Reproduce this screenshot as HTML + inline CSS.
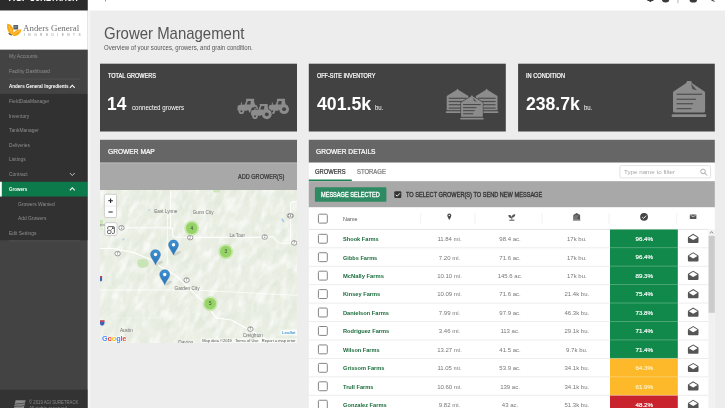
<!DOCTYPE html>
<html lang="en">
<head>
<meta charset="utf-8">
<title>Grower Management</title>
<style>
*{box-sizing:border-box;margin:0;padding:0}
html,body{width:725px;height:408px;overflow:hidden;background:#ededed;font-family:"Liberation Sans",sans-serif}
#root{position:relative;width:725px;height:408px;overflow:hidden;background:#ededed}
#root div,#root span,#root svg{position:absolute}
.t{white-space:nowrap;line-height:1}
</style>
</head>
<body>
<div id="root">
<svg style="left:0;top:0" width="725" height="408" viewBox="0 0 725 408"><rect x="0" y="0" width="725" height="408" fill="#ededed"/><rect x="0" y="0" width="87.8" height="408" fill="#434343"/><rect x="0" y="0" width="87.8" height="10.5" fill="#2b2b2b"/><rect x="0" y="10.5" width="87.8" height="39.3" fill="#fff"/><rect x="0" y="49.8" width="87.8" height="44.1" fill="#434343"/><rect x="0" y="93.9" width="87.8" height="146.3" fill="#313131"/><rect x="9" y="78.7" width="70.5" height="0.7" fill="#565656"/><rect x="0" y="181.8" width="87.8" height="14.7" fill="#0c7a4b"/><rect x="0" y="181.8" width="1.8" height="14.7" fill="#fff"/><rect x="9" y="240.6" width="70.5" height="0.7" fill="#585858"/><rect x="0" y="389.7" width="87.8" height="18.3" fill="#333"/><rect x="87.8" y="10.5" width="1.6" height="397.5" fill="#f7f7f7"/><rect x="89.39999999999999" y="10.5" width="1.2" height="397.5" fill="#f2f2f2"/><path d="M69.9 87.8 L72.3 85.2 L74.7 87.8" fill="none" stroke="#fff" stroke-width="1.1"/><path d="M69.9 173 L72.3 175.6 L74.7 173" fill="none" stroke="#bdbdbd" stroke-width="1"/><path d="M69.9 190.3 L72.3 187.7 L74.7 190.3" fill="none" stroke="#fff" stroke-width="1.1"/><g transform="translate(6.5,23.5)">
<path d="M6.9 1.6 h4.7 v4.3 h-4.7z" fill="#596068"/>
<path d="M8 2.6 h2.2 v1.6 h-2.2z" fill="#8a9098"/>
<path d="M1.6 9.4 q1.4 2.8 4 2.6 l-.4 -2.8z" fill="#4d5864"/>
<path d="M0.8 0.3 C4.6 0.5 7.8 4 6.9 12.1 C2.4 10.6 -0.5 6 0.8 0.3z" fill="#f9a811"/>
<path d="M14.9 6.1 C14.2 10.6 10.6 13.1 6.3 12.5 C6.5 8.3 10 5.5 14.9 6.1z" fill="#f9a811"/>
<path d="M2.2 2.4 C3.6 5.2 5 8 5.8 10.6" stroke="#fde2a8" stroke-width=".5" fill="none"/>
<path d="M13.4 7 C10.6 8.2 8.2 10 6.8 12" stroke="#fde2a8" stroke-width=".5" fill="none"/>
</g><g transform="translate(13.4,400.3)"><path d="M2.2 0 H12.2 L10.4 8 H0.4z" fill="#8b8b8b"/><path d="M1.2 4.2 C4.5 2.2 8 4.6 11.4 2.4 M0.8 6.6 C4 4.6 7.6 7 10.8 5" stroke="#333" stroke-width=".7" fill="none"/></g><rect x="87.8" y="0" width="637.2" height="10.5" fill="#fff"/><g transform="translate(640,0)">
<path d="M7.4 0 h6 v1 h-6z M9.5 1.1 h1.8 v.9 h-1.8z" fill="#3a3a3a"/>
<path d="M22 0 a3.6 2.4 0 0 0 7.2 0z" fill="#3a3a3a"/>
<rect x="37.6" y="0" width=".7" height="3.2" fill="#999"/>
<path d="M49.6 0 a3.7 2.6 0 0 0 7.4 0z" fill="#3a3a3a"/>
<path d="M70.8 0 h2 l2.6 1.6 h-2z" fill="#3a3a3a"/>
</g><rect x="105" y="0" width="0.8" height="1.4" fill="#777"/><rect x="100" y="63.7" width="197" height="67.8" fill="#424242"/><rect x="308.8" y="63.7" width="197" height="67.8" fill="#424242"/><rect x="518.1" y="63.7" width="196.7" height="67.8" fill="#424242"/><rect x="100" y="139.8" width="197" height="22.9" fill="#666"/><rect x="100" y="162.7" width="197" height="27.5" fill="#a8a8a8"/><rect x="100" y="162.9" width="197" height="0.8" fill="#b6b6b6"/><rect x="308.8" y="139.8" width="406" height="22.9" fill="#666"/><rect x="308.8" y="162.7" width="406" height="18.5" fill="#fff"/><rect x="308.8" y="179.5" width="43" height="1.6" fill="#1d8153"/><rect x="308.8" y="181.2" width="406" height="26.2" fill="#a8a8a8"/><rect x="308.8" y="207.4" width="406" height="200.6" fill="#fff"/><rect x="619.9" y="165.9" width="90.7" height="12.4" rx="1" fill="#000" opacity=".06"/><rect x="619.9" y="165.6" width="90.7" height="12.3" rx="1" fill="#fff" stroke="#dcdcdc" stroke-width=".8"/><circle cx="703" cy="171.4" r="2.3" fill="none" stroke="#9a9a9a" stroke-width=".8"/><path d="M704.7 173.1 L707.1 175.5" stroke="#9a9a9a" stroke-width="1"/><rect x="314.9" y="187.3" width="71.5" height="14.4" rx="0.8" fill="#2d8a62"/><g transform="translate(394.3,191.3)"><rect width="7" height="6.8" rx="1" fill="#333"/><path d="M1.5 3.5 L2.9 4.9 L5.6 2" fill="none" stroke="#fff" stroke-width=".9"/></g></svg>

<svg style="left:0;top:0" width="725" height="135" viewBox="0 0 725 135"><g transform="translate(237.3,98.8)"><g fill="#8c8c8c"><path d="M9.3 0 H16.3 Q17 0 17 .7 V1.3 H16.5 L17.7 6.4 H19.4 V11 H10.2 V11.9 H1.2 Q.2 11.9 .2 10.9 V8.2 Q.2 6.3 2.1 6.1 L3.6 6 V3.7 H4.6 V5.9 L7.6 5.7 L9.1 1.3 H8.7 V.6 Q8.7 0 9.3 0z"/><circle cx="15.9" cy="10.4" r="4.9"/><circle cx="4.1" cy="12.4" r="2.8"/></g><path d="M10.6 2.1 H13.5 L13.1 5.6 H9.3z" fill="#424242"/><circle cx="15.9" cy="10.4" r="1.9" fill="#424242"/><circle cx="4.1" cy="12.4" r=".95" fill="#424242"/></g><g transform="translate(268.2,98.8)"><g fill="#8c8c8c"><path d="M9.3 0 H16.3 Q17 0 17 .7 V1.3 H16.5 L17.7 6.4 H19.4 V11 H10.2 V11.9 H1.2 Q.2 11.9 .2 10.9 V8.2 Q.2 6.3 2.1 6.1 L3.6 6 V3.7 H4.6 V5.9 L7.6 5.7 L9.1 1.3 H8.7 V.6 Q8.7 0 9.3 0z"/><circle cx="15.9" cy="10.4" r="4.9"/><circle cx="4.1" cy="12.4" r="2.8"/></g><path d="M10.6 2.1 H13.5 L13.1 5.6 H9.3z" fill="#424242"/><circle cx="15.9" cy="10.4" r="1.9" fill="#424242"/><circle cx="4.1" cy="12.4" r=".95" fill="#424242"/></g><g transform="translate(250.9,103.9)"><g fill="#424242" stroke="#424242" stroke-width="1.5" stroke-linejoin="round"><path d="M9.3 0 H16.3 Q17 0 17 .7 V1.3 H16.5 L17.7 6.4 H19.4 V11 H10.2 V11.9 H1.2 Q.2 11.9 .2 10.9 V8.2 Q.2 6.3 2.1 6.1 L3.6 6 V3.7 H4.6 V5.9 L7.6 5.7 L9.1 1.3 H8.7 V.6 Q8.7 0 9.3 0z"/><circle cx="15.9" cy="10.4" r="4.9"/><circle cx="4.1" cy="12.4" r="2.8"/></g><g fill="#8c8c8c"><path d="M9.3 0 H16.3 Q17 0 17 .7 V1.3 H16.5 L17.7 6.4 H19.4 V11 H10.2 V11.9 H1.2 Q.2 11.9 .2 10.9 V8.2 Q.2 6.3 2.1 6.1 L3.6 6 V3.7 H4.6 V5.9 L7.6 5.7 L9.1 1.3 H8.7 V.6 Q8.7 0 9.3 0z"/><circle cx="15.9" cy="10.4" r="4.9"/><circle cx="4.1" cy="12.4" r="2.8"/></g><path d="M10.6 2.1 H13.5 L13.1 5.6 H9.3z" fill="#424242"/><circle cx="15.9" cy="10.4" r="1.9" fill="#424242"/><circle cx="4.1" cy="12.4" r=".95" fill="#424242"/></g><g transform="translate(445.9,88.9)"><g fill="#8c8c8c" ><path d="M11.1 0 Q11.6 -.2 12.1 0 L12.6 1 L22.5 7.2 V21.4 H.8 V7.2 L10.7 1z"/><rect x="0" y="22.4" width="23.3" height="1.8" rx=".5"/></g><rect x="2.8" y="8.8" width="17.8" height="1.2" fill="#424242" opacity=".85"/><rect x="2.8" y="12.0" width="17.8" height="1.2" fill="#424242" opacity=".85"/><rect x="2.8" y="15.2" width="17.8" height="1.2" fill="#424242" opacity=".85"/><rect x="2.8" y="18.6" width="17.8" height="1.2" fill="#424242" opacity=".85"/></g><g transform="translate(475.0,88.9)"><g fill="#8c8c8c" ><path d="M11.1 0 Q11.6 -.2 12.1 0 L12.6 1 L22.5 7.2 V21.4 H.8 V7.2 L10.7 1z"/><rect x="0" y="22.4" width="23.3" height="1.8" rx=".5"/></g><rect x="2.8" y="8.8" width="17.8" height="1.2" fill="#424242" opacity=".85"/><rect x="2.8" y="12.0" width="17.8" height="1.2" fill="#424242" opacity=".85"/><rect x="2.8" y="15.2" width="17.8" height="1.2" fill="#424242" opacity=".85"/><rect x="2.8" y="18.6" width="17.8" height="1.2" fill="#424242" opacity=".85"/></g><g transform="translate(460.3,95.4)"><g fill="#8c8c8c" stroke="#424242" stroke-width="1.2" paint-order="stroke"><path d="M11.1 0 Q11.6 -.2 12.1 0 L12.6 1 L22.5 7.2 V21.4 H.8 V7.2 L10.7 1z"/><rect x="0" y="22.4" width="23.3" height="1.8" rx=".5"/></g><rect x="2.8" y="8.6" width="17.6" height="1.1" fill="#424242" opacity=".9"/><rect x="2.8" y="11.7" width="13.4" height="1.1" fill="#424242" opacity=".9"/><rect x="2.8" y="14.7" width="11.6" height="1.1" fill="#424242" opacity=".9"/><rect x="2.8" y="17.8" width="10.2" height="1.1" fill="#424242" opacity=".9"/><path d="M12.4 2.2 L16.6 6.6 L13.8 5.6z" fill="#424242" opacity=".85"/></g><g transform="translate(671.6,81.0)" fill="#8c8c8c"><path d="M15.6 0 H19.2 Q19.8 0 19.9 .7 L20.2 2 L32.6 10.2 Q33.5 10.8 33.5 11.6 V30 Q33.5 31.6 32 31.6 H3 Q1.4 31.6 1.4 30 V11.6 Q1.4 10.8 2.3 10.2 L14.7 2 L15 .7 Q15.1 0 15.6 0z"/><rect x="0" y="33.2" width="34.8" height="2.9" rx="1.4"/><rect x="4.9" y="12.7" width="25.6" height="1.1" fill="#424242" opacity=".9"/><rect x="4.9" y="17.7" width="19.6" height="1.1" fill="#424242" opacity=".9"/><rect x="4.9" y="22.2" width="16.6" height="1.1" fill="#424242" opacity=".9"/><rect x="4.9" y="27.1" width="15.0" height="1.1" fill="#424242" opacity=".9"/><path d="M19.4 2.6 L25.4 9.6 L20.8 8z" fill="#424242" opacity=".85"/></g></svg>
<svg id="map" style="left:100px;top:190.1px;will-change:transform" width="197" height="153" viewBox="0 0 197 153" font-family="Liberation Sans, sans-serif"><defs>
<linearGradient id="mk" x1="0" y1="0" x2="0" y2="1"><stop offset="0" stop-color="#3f94d6"/><stop offset="1" stop-color="#2a72b4"/></linearGradient>
<filter id="ter" x="0" y="0" width="100%" height="100%"><feTurbulence type="fractalNoise" baseFrequency=".13 .06" numOctaves="4" seed="11"/><feColorMatrix type="matrix" values="0 0 0 0 .74  0 0 0 0 .81  0 0 0 0 .7  2.6 0 0 0 -1.05"/></filter>
<filter id="ter2" x="0" y="0" width="100%" height="100%"><feTurbulence type="fractalNoise" baseFrequency=".15 .07" numOctaves="4" seed="4"/><feColorMatrix type="matrix" values="0 0 0 0 1  0 0 0 0 1  0 0 0 0 1  0 2.4 0 0 -1"/></filter>
<filter id="ter3" x="0" y="0" width="100%" height="100%"><feTurbulence type="fractalNoise" baseFrequency=".02 .025" numOctaves="2" seed="7"/><feColorMatrix type="matrix" values="0 0 0 0 .8  0 0 0 0 .86  0 0 0 0 .76  1.6 0 0 0 -.62"/></filter>
<clipPath id="mc"><rect width="197" height="153"/></clipPath>
</defs><rect width="197" height="153" fill="#eaeee3"/><rect width="197" height="153" filter="url(#ter3)" opacity=".5"/><g clip-path="url(#mc)"><g transform="rotate(24 98 76)"><rect x="-60" y="-80" width="320" height="320" filter="url(#ter)" opacity=".7"/><rect x="-60" y="-80" width="320" height="320" filter="url(#ter2)" opacity=".7"/></g></g><path d="M38 70 q4.5 -1.8 9 0 q2.6 2.8 .8 6.2 q-4.4 2.6 -9 .8 q-2.6 -3.4 -.8 -7z" fill="#c5e3b0" opacity=".9"/><path d="M0 30 h3 v9 h-3z" fill="#bfe0a8" opacity=".8"/><path d="M113 0 h7 v2.4 h-7z" fill="#c5e3b0" opacity=".8"/><path d="M182 28 l2.4 3.6 l-1.2 .8 l-2 -3.4z" fill="#9cc8f0"/><circle cx="23.5" cy="49.5" r="1" fill="#a5cdf2"/><circle cx="49" cy="20" r=".8" fill="#a5cdf2"/><g fill="none" stroke="#fff" stroke-width="1.15" stroke-opacity=".9" stroke-linejoin="round" stroke-linecap="round"><path d="M0 37.7 H68.5 L72.6 38.6 V44.6 Q72.8 46.8 75.5 47 L90 47.4 H157 L172.5 46.6 Q174.6 47 175.5 49 L177 52 Q178 53.2 180 53.2 H197"/><path d="M70.6 0 V38.4"/><path d="M67.4 20 V74" stroke-width=".8"/><path d="M197 11.4 L192 12.4 Q190.6 12.8 190.6 15 V53"/><path d="M0 58.3 H12.5 L34 62.6 L54.5 71 L60 76.4 L76.4 85.8 L92 101.4 L103.9 112.2 L116.6 127.8 L131.3 130 L147 138.6 L162.7 146.6 L171 153" stroke-width="1.25" stroke-opacity=".95"/><path d="M0 100 H92 L197 105.3" stroke-width=".85"/></g><g fill="none" stroke="#fff" stroke-width=".45" opacity=".5"><path d="M30 0 V37 M110 47 V100 M0 128 H60 M140 53 V104 M150 0 V46"/></g><ellipse cx="21.5" cy="37.8" rx="2.7" ry="2.3" fill="#fff" stroke="#5e5e5e" stroke-width=".6"/><text x="21.5" y="38.949999999999996" font-size="3.1" fill="#444" text-anchor="middle">2</text><ellipse cx="17.6" cy="63.6" rx="2.7" ry="2.3" fill="#fff" stroke="#5e5e5e" stroke-width=".6"/><text x="17.6" y="64.75" font-size="3.1" fill="#444" text-anchor="middle">7</text><ellipse cx="90.2" cy="47.6" rx="2.7" ry="2.3" fill="#fff" stroke="#5e5e5e" stroke-width=".6"/><text x="90.2" y="48.75" font-size="3.1" fill="#444" text-anchor="middle">2</text><ellipse cx="164.7" cy="47" rx="2.7" ry="2.3" fill="#fff" stroke="#5e5e5e" stroke-width=".6"/><text x="164.7" y="48.15" font-size="3.1" fill="#444" text-anchor="middle">2</text><ellipse cx="194.2" cy="52.9" rx="2.7" ry="2.3" fill="#fff" stroke="#5e5e5e" stroke-width=".6"/><text x="194.2" y="54.05" font-size="3.1" fill="#444" text-anchor="middle">7</text><ellipse cx="190.3" cy="25.8" rx="3.2" ry="2.3" fill="#fff" stroke="#5e5e5e" stroke-width=".6"/><text x="190.3" y="26.95" font-size="3.1" fill="#444" text-anchor="middle">131</text><ellipse cx="86.6" cy="90.1" rx="2.7" ry="2.3" fill="#fff" stroke="#5e5e5e" stroke-width=".6"/><text x="86.6" y="91.25" font-size="3.1" fill="#444" text-anchor="middle">7</text><ellipse cx="150.4" cy="139.1" rx="2.7" ry="2.3" fill="#fff" stroke="#5e5e5e" stroke-width=".6"/><text x="150.4" y="140.25" font-size="3.1" fill="#444" text-anchor="middle">7</text><g><path d="M-0.5 86 h2.6 v4.6 q-1.3 1.6 -2.6 0z" fill="#3f62b8"/><rect x="-0.5" y="86" width="2.6" height="1.4" fill="#d64545"/></g><g><path d="M-0.2 130.4 h4.6 v3.6 q-2.3 3.4 -4.6 0z" fill="#3f62b8"/><rect x="-0.2" y="130.4" width="4.6" height="1.5" fill="#d64545"/></g><g fill="#727272" font-size="4.7" text-anchor="middle" stroke="#edf0e8" stroke-width=".4" paint-order="stroke"><text x="65.8" y="23.3">East Lynne</text><text x="103.1" y="23.8">Gunn City</text><text x="137.2" y="47.4">La Tour</text><text x="87" y="100.2">Garden City</text><text x="26.4" y="141.6">Austin</text><text x="152.8" y="147">Creighton</text><text x="85.7" y="153.6">Dayton</text><text x="4" y="35.5" font-size="4.4">sonville</text></g><circle cx="91.7" cy="38.1" r="7.5" fill="#b5e28c" fill-opacity=".62"/><circle cx="91.7" cy="38.1" r="5.8" fill="#74c63a" fill-opacity=".62"/><text x="91.7" y="39.7" font-size="4.6" fill="#3a3a3a" text-anchor="middle">4</text><circle cx="125.8" cy="61.6" r="7.5" fill="#b5e28c" fill-opacity=".62"/><circle cx="125.8" cy="61.6" r="5.8" fill="#74c63a" fill-opacity=".62"/><text x="125.8" y="63.2" font-size="4.6" fill="#3a3a3a" text-anchor="middle">3</text><circle cx="110.2" cy="113.7" r="7.5" fill="#b5e28c" fill-opacity=".62"/><circle cx="110.2" cy="113.7" r="5.8" fill="#74c63a" fill-opacity=".62"/><text x="110.2" y="115.3" font-size="4.6" fill="#3a3a3a" text-anchor="middle">5</text><g transform="translate(68.5,49.8)"><ellipse cx="8.6" cy="13.6" rx="4.2" ry="1.5" fill="#000" opacity=".1" transform="rotate(-28 8.6 13.6)"/><path d="M5 0.2 C7.9 0.2 9.9 2.3 9.9 5 C9.9 7.2 8.4 9 7.2 11 C6.3 12.5 5.5 13.8 5 15 C4.5 13.8 3.7 12.5 2.8 11 C1.6 9 .1 7.2 .1 5 C.1 2.3 2.1 .2 5 .2z" fill="url(#mk)" stroke="#246aa8" stroke-width=".5"/><circle cx="5" cy="4.9" r="1.7" fill="#fff"/></g><g transform="translate(50.5,59.6)"><ellipse cx="8.6" cy="13.6" rx="4.2" ry="1.5" fill="#000" opacity=".1" transform="rotate(-28 8.6 13.6)"/><path d="M5 0.2 C7.9 0.2 9.9 2.3 9.9 5 C9.9 7.2 8.4 9 7.2 11 C6.3 12.5 5.5 13.8 5 15 C4.5 13.8 3.7 12.5 2.8 11 C1.6 9 .1 7.2 .1 5 C.1 2.3 2.1 .2 5 .2z" fill="url(#mk)" stroke="#246aa8" stroke-width=".5"/><circle cx="5" cy="4.9" r="1.7" fill="#fff"/></g><g transform="translate(59.7,79.6)"><ellipse cx="8.6" cy="13.6" rx="4.2" ry="1.5" fill="#000" opacity=".1" transform="rotate(-28 8.6 13.6)"/><path d="M5 0.2 C7.9 0.2 9.9 2.3 9.9 5 C9.9 7.2 8.4 9 7.2 11 C6.3 12.5 5.5 13.8 5 15 C4.5 13.8 3.7 12.5 2.8 11 C1.6 9 .1 7.2 .1 5 C.1 2.3 2.1 .2 5 .2z" fill="url(#mk)" stroke="#246aa8" stroke-width=".5"/><circle cx="5" cy="4.9" r="1.7" fill="#fff"/></g><text x="2" y="150.6" font-size="7.5" font-weight="bold" letter-spacing="-.3" stroke="#fff" stroke-width="1" paint-order="stroke" stroke-linejoin="round"><tspan fill="#4285f4">G</tspan><tspan fill="#ea4335">o</tspan><tspan fill="#fbbc05">o</tspan><tspan fill="#4285f4">g</tspan><tspan fill="#34a853">l</tspan><tspan fill="#ea4335">e</tspan></text><rect x="100.5" y="148.4" width="96.5" height="4.6" fill="#fff" opacity=".55"/><text x="102.3" y="152.2" font-size="3.45" fill="#555" textLength="93.2" lengthAdjust="spacingAndGlyphs">Map data ©2019 &#160; Terms of Use &#160; Report a map error</text><rect x="180.6" y="139.6" width="16.4" height="5.8" fill="#fff" opacity=".8"/><text x="182" y="144.2" font-size="4.3" fill="#0a78c2" textLength="13.6" lengthAdjust="spacingAndGlyphs">Leaflet</text><g><rect x="4.4" y="4.3" width="12.1" height="23.2" rx="1.3" fill="#fff" stroke="#bdbdbd" stroke-width=".7"/><path d="M4.6 16 h11.8" stroke="#d4d4d4" stroke-width=".5"/><path d="M8.3 10.7 h4.6 M10.6 8.4 v4.6 M8.5 21.9 h4.2" stroke="#222" stroke-width="1.05"/></g><g><rect x="4.9" y="32.7" width="12.1" height="12.7" rx="1.3" fill="#fff" stroke="#bdbdbd" stroke-width=".7"/><path d="M7.7 39.2 V37.4 Q7.7 36.6 8.5 36.6 H13.6 Q14.4 36.6 14.4 37.4 V42.6 Q14.4 43.4 13.6 43.4 H12 M11.4 39.6 L13.2 37.8 M12 37.7 H13.3 V39" fill="none" stroke="#333" stroke-width=".75"/><rect x="7.6" y="40.3" width="3.4" height="3.2" rx=".7" fill="none" stroke="#333" stroke-width=".75"/></g></svg>
<svg style="left:0;top:0" width="725" height="408" viewBox="0 0 725 408"><rect x="308.8" y="228.9" width="399.6" height="0.9" fill="#e2e2e2"/><rect x="420.4" y="213" width="0.8" height="11" fill="#eeeeee"/><rect x="474.6" y="213" width="0.8" height="11" fill="#eeeeee"/><rect x="541.6" y="213" width="0.8" height="11" fill="#eeeeee"/><rect x="608.6" y="213" width="0.8" height="11" fill="#eeeeee"/><rect x="676.4" y="213" width="0.8" height="11" fill="#eeeeee"/><rect x="318.4" y="214.2" width="8.9" height="8.9" rx="1" fill="#fff" stroke="#858585" stroke-width="1"/><g transform="translate(447.3,213.4)"><path d="M2 0 C3.2 0 4 .9 4 2 C4 3.4 2 6.4 2 6.4 C2 6.4 0 3.4 0 2 C0 .9 .8 0 2 0z" fill="#4a4a4a"/><circle cx="2" cy="2" r=".7" fill="#fff"/></g><g transform="translate(508.4,214.2)"><path d="M0 .9 C2.4 .3 3.6 1.7 3.5 4 C1.3 4.3 0 3 0 .9z M6.9 0 C4.6 -.2 3.4 1 3.5 3.2 C5.6 3.5 6.9 2.2 6.9 0z" fill="#555"/><path d="M3.45 2.8 V5.6" stroke="#555" stroke-width=".8"/><rect x=".9" y="5.5" width="5.1" height="1" fill="#555"/></g><g transform="translate(572.9,212.9)"><path d="M3.8 0 L7.2 2.2 V6.6 H.4 V2.2z M0 6.9 H7.6 V7.6 H0z" fill="#555"/><path d="M1.4 3 H5.8 M1.4 4.2 H4.8 M1.4 5.4 H4.4" stroke="#fff" stroke-width=".5" opacity=".55"/></g><g transform="translate(640.1,212.9)"><circle cx="3.95" cy="3.95" r="3.9" fill="#444"/><path d="M2.1 4.1 L3.5 5.5 L6 2.8" fill="none" stroke="#fff" stroke-width=".95"/></g><g transform="translate(689.8,214.4)"><rect width="6.6" height="4.6" rx=".6" fill="#555"/><path d="M.7 .8 L3.3 2.4 L5.9 .8" fill="none" stroke="#fff" stroke-width=".6"/></g><rect x="308.8" y="247.34" width="399.6" height="0.9" fill="#ebebeb"/><rect x="308.8" y="265.78" width="399.6" height="0.9" fill="#ebebeb"/><rect x="308.8" y="284.22" width="399.6" height="0.9" fill="#ebebeb"/><rect x="308.8" y="302.66" width="399.6" height="0.9" fill="#ebebeb"/><rect x="308.8" y="321.1" width="399.6" height="0.9" fill="#ebebeb"/><rect x="308.8" y="339.54" width="399.6" height="0.9" fill="#ebebeb"/><rect x="308.8" y="357.98" width="399.6" height="0.9" fill="#ebebeb"/><rect x="308.8" y="376.42" width="399.6" height="0.9" fill="#ebebeb"/><rect x="308.8" y="394.86" width="399.6" height="0.9" fill="#ebebeb"/><rect x="308.8" y="413.3" width="399.6" height="0.9" fill="#ebebeb"/><rect x="610" y="229.5" width="67.8" height="129.08" fill="#10894a"/><rect x="610" y="358.58" width="67.8" height="36.88" fill="#fdb92a"/><rect x="610" y="395.46" width="67.8" height="30" fill="#c9242d"/><rect x="318.4" y="234.3" width="8.9" height="8.9" rx="1" fill="#fff" stroke="#858585" stroke-width="1"/><g transform="translate(687.9,233.8)"><path d="M5.3 0 L10.1 2.9 Q10.6 3.2 10.6 3.8 V8.2 Q10.6 9.2 9.6 9.2 H1 Q0 9.2 0 8.2 V3.8 Q0 3.2 .5 2.9z" fill="#555"/><path d="M5.3 1.1 L9.6 3.7 L5.3 6.3 L1 3.7z" fill="#fff"/></g><rect x="610" y="247.24" width="67.8" height="0.9" fill="#fff" opacity=".28"/><rect x="318.4" y="252.74" width="8.9" height="8.9" rx="1" fill="#fff" stroke="#858585" stroke-width="1"/><g transform="translate(687.9,252.24)"><path d="M5.3 0 L10.1 2.9 Q10.6 3.2 10.6 3.8 V8.2 Q10.6 9.2 9.6 9.2 H1 Q0 9.2 0 8.2 V3.8 Q0 3.2 .5 2.9z" fill="#555"/><path d="M5.3 1.1 L9.6 3.7 L5.3 6.3 L1 3.7z" fill="#fff"/></g><rect x="610" y="265.68" width="67.8" height="0.9" fill="#fff" opacity=".28"/><rect x="318.4" y="271.18" width="8.9" height="8.9" rx="1" fill="#fff" stroke="#858585" stroke-width="1"/><g transform="translate(687.9,270.68)"><path d="M5.3 0 L10.1 2.9 Q10.6 3.2 10.6 3.8 V8.2 Q10.6 9.2 9.6 9.2 H1 Q0 9.2 0 8.2 V3.8 Q0 3.2 .5 2.9z" fill="#555"/><path d="M5.3 1.1 L9.6 3.7 L5.3 6.3 L1 3.7z" fill="#fff"/></g><rect x="610" y="284.12" width="67.8" height="0.9" fill="#fff" opacity=".28"/><rect x="318.4" y="289.62" width="8.9" height="8.9" rx="1" fill="#fff" stroke="#858585" stroke-width="1"/><g transform="translate(687.9,289.12)"><path d="M5.3 0 L10.1 2.9 Q10.6 3.2 10.6 3.8 V8.2 Q10.6 9.2 9.6 9.2 H1 Q0 9.2 0 8.2 V3.8 Q0 3.2 .5 2.9z" fill="#555"/><path d="M5.3 1.1 L9.6 3.7 L5.3 6.3 L1 3.7z" fill="#fff"/></g><rect x="610" y="302.56" width="67.8" height="0.9" fill="#fff" opacity=".28"/><rect x="318.4" y="308.06" width="8.9" height="8.9" rx="1" fill="#fff" stroke="#858585" stroke-width="1"/><g transform="translate(687.9,307.56)"><path d="M5.3 0 L10.1 2.9 Q10.6 3.2 10.6 3.8 V8.2 Q10.6 9.2 9.6 9.2 H1 Q0 9.2 0 8.2 V3.8 Q0 3.2 .5 2.9z" fill="#555"/><path d="M5.3 1.1 L9.6 3.7 L5.3 6.3 L1 3.7z" fill="#fff"/></g><rect x="610" y="321.0" width="67.8" height="0.9" fill="#fff" opacity=".28"/><rect x="318.4" y="326.5" width="8.9" height="8.9" rx="1" fill="#fff" stroke="#858585" stroke-width="1"/><g transform="translate(687.9,326.0)"><path d="M5.3 0 L10.1 2.9 Q10.6 3.2 10.6 3.8 V8.2 Q10.6 9.2 9.6 9.2 H1 Q0 9.2 0 8.2 V3.8 Q0 3.2 .5 2.9z" fill="#555"/><path d="M5.3 1.1 L9.6 3.7 L5.3 6.3 L1 3.7z" fill="#fff"/></g><rect x="610" y="339.44" width="67.8" height="0.9" fill="#fff" opacity=".28"/><rect x="318.4" y="344.94" width="8.9" height="8.9" rx="1" fill="#fff" stroke="#858585" stroke-width="1"/><g transform="translate(687.9,344.44)"><path d="M5.3 0 L10.1 2.9 Q10.6 3.2 10.6 3.8 V8.2 Q10.6 9.2 9.6 9.2 H1 Q0 9.2 0 8.2 V3.8 Q0 3.2 .5 2.9z" fill="#555"/><path d="M5.3 1.1 L9.6 3.7 L5.3 6.3 L1 3.7z" fill="#fff"/></g><rect x="610" y="357.88" width="67.8" height="0.9" fill="#fff" opacity=".28"/><rect x="318.4" y="363.38" width="8.9" height="8.9" rx="1" fill="#fff" stroke="#858585" stroke-width="1"/><g transform="translate(687.9,362.88)"><path d="M5.3 0 L10.1 2.9 Q10.6 3.2 10.6 3.8 V8.2 Q10.6 9.2 9.6 9.2 H1 Q0 9.2 0 8.2 V3.8 Q0 3.2 .5 2.9z" fill="#555"/><path d="M5.3 1.1 L9.6 3.7 L5.3 6.3 L1 3.7z" fill="#fff"/></g><rect x="610" y="376.32" width="67.8" height="0.9" fill="#fff" opacity=".28"/><rect x="318.4" y="381.82" width="8.9" height="8.9" rx="1" fill="#fff" stroke="#858585" stroke-width="1"/><g transform="translate(687.9,381.32)"><path d="M5.3 0 L10.1 2.9 Q10.6 3.2 10.6 3.8 V8.2 Q10.6 9.2 9.6 9.2 H1 Q0 9.2 0 8.2 V3.8 Q0 3.2 .5 2.9z" fill="#555"/><path d="M5.3 1.1 L9.6 3.7 L5.3 6.3 L1 3.7z" fill="#fff"/></g><rect x="610" y="394.76" width="67.8" height="0.9" fill="#fff" opacity=".28"/><rect x="318.4" y="400.26" width="8.9" height="8.9" rx="1" fill="#fff" stroke="#858585" stroke-width="1"/><g transform="translate(687.9,399.76)"><path d="M5.3 0 L10.1 2.9 Q10.6 3.2 10.6 3.8 V8.2 Q10.6 9.2 9.6 9.2 H1 Q0 9.2 0 8.2 V3.8 Q0 3.2 .5 2.9z" fill="#555"/><path d="M5.3 1.1 L9.6 3.7 L5.3 6.3 L1 3.7z" fill="#fff"/></g><rect x="610" y="413.2" width="67.8" height="0.9" fill="#fff" opacity=".28"/><rect x="708.4" y="229.5" width="6.4" height="180" fill="#f1f1f1"/><rect x="708.6" y="235.9" width="6.2" height="76.9" fill="#cbcbcb"/><path d="M710 233.4 L711.6 231.6 L713.2 233.4" fill="none" stroke="#666" stroke-width=".7"/></svg>
<span class="t" style="left:104.20px;top:25px;font-size:16.4px;color:#555;transform-origin:0 0;transform:scaleX(0.9119);">Grower Management</span>
<span class="t" style="left:104.20px;top:45px;font-size:6.3px;color:#555;transform-origin:0 0;transform:scaleX(0.9567);">Overview of your sources, growers, and grain condition.</span>
<span class="t" style="left:108.00px;top:73px;font-size:6.4px;color:#fff;-webkit-text-stroke:.22px currentColor;transform-origin:0 0;transform:scaleX(0.8688);">TOTAL GROWERS</span>
<span class="t" style="left:107.09px;top:94px;font-size:19px;color:#fff;font-weight:bold;transform-origin:0 0;transform:scaleX(0.9141);">14</span>
<span class="t" style="left:131.80px;top:105px;font-size:6.4px;color:#fff;transform-origin:0 0;transform:scaleX(0.9665);">connected growers</span>
<span class="t" style="left:316.60px;top:73px;font-size:6.4px;color:#fff;-webkit-text-stroke:.22px currentColor;transform-origin:0 0;transform:scaleX(0.8591);">OFF-SITE INVENTORY</span>
<span class="t" style="left:316.80px;top:94px;font-size:19px;color:#fff;font-weight:bold;transform-origin:0 0;transform:scaleX(0.9326);">401.5k</span>
<span class="t" style="left:375.00px;top:105px;font-size:6.4px;color:#fff;transform-origin:0 0;transform:scaleX(0.9442);">bu.</span>
<span class="t" style="left:525.60px;top:73px;font-size:6.4px;color:#fff;-webkit-text-stroke:.22px currentColor;transform-origin:0 0;transform:scaleX(0.8850);">IN CONDITION</span>
<span class="t" style="left:525.60px;top:94px;font-size:19px;color:#fff;font-weight:bold;transform-origin:0 0;transform:scaleX(0.9258);">238.7k</span>
<span class="t" style="left:584.00px;top:105px;font-size:6.4px;color:#fff;transform-origin:0 0;transform:scaleX(0.9442);">bu.</span>
<span class="t" style="left:107.70px;top:148px;font-size:7.3px;color:#fff;-webkit-text-stroke:.22px currentColor;transform-origin:0 0;transform:scaleX(0.9086);">GROWER MAP</span>
<span class="t" style="left:238.30px;top:174px;font-size:6.6px;color:#333;-webkit-text-stroke:.22px currentColor;transform-origin:0 0;transform:scaleX(0.8438);">ADD GROWER(S)</span>
<span class="t" style="left:316.40px;top:148px;font-size:7.3px;color:#fff;-webkit-text-stroke:.22px currentColor;transform-origin:0 0;transform:scaleX(0.9075);">GROWER DETAILS</span>
<span class="t" style="left:314.90px;top:169px;font-size:6.8px;color:#333;-webkit-text-stroke:.22px currentColor;transform-origin:0 0;transform:scaleX(0.8558);">GROWERS</span>
<span class="t" style="left:357.10px;top:169px;font-size:6.8px;color:#777;-webkit-text-stroke:.22px currentColor;transform-origin:0 0;transform:scaleX(0.8726);">STORAGE</span>
<span class="t" style="left:623.70px;top:169px;font-size:6.1px;color:#a6a6a6;transform-origin:0 0;transform:scaleX(1.0200);">Type name to filter</span>
<span class="t" style="left:321.10px;top:192px;font-size:6.4px;color:#fff;-webkit-text-stroke:.3px currentColor;transform-origin:0 0;transform:scaleX(0.8755);">MESSAGE SELECTED</span>
<span class="t" style="left:405.70px;top:192px;font-size:6.4px;color:#333;-webkit-text-stroke:.3px currentColor;transform-origin:0 0;transform:scaleX(0.8786);">TO SELECT GROWER(S) TO SEND NEW MESSAGE</span>
<span class="t" style="left:342.70px;top:217px;font-size:5.7px;color:#555;transform-origin:0 0;transform:scaleX(0.9595);">Name</span>
<span class="t" style="left:342.70px;top:236px;font-size:6.1px;color:#196b3b;font-weight:bold;transform-origin:0 0;transform:scaleX(0.9257);">Shook Farms</span>
<span class="t" style="left:449.50px;top:236px;font-size:6.0px;color:#777;transform:translateX(-50%);">11.84 mi.</span>
<span class="t" style="left:510.00px;top:236px;font-size:6.0px;color:#777;transform:translateX(-50%);">98.4 ac.</span>
<span class="t" style="left:576.80px;top:236px;font-size:6.0px;color:#777;transform:translateX(-50%);">17k bu.</span>
<span class="t" style="left:644.30px;top:236px;font-size:6.2px;color:#fff;-webkit-text-stroke:.16px currentColor;transform:translateX(-50%);">96.4%</span>
<span class="t" style="left:342.70px;top:255px;font-size:6.1px;color:#196b3b;font-weight:bold;transform-origin:0 0;transform:scaleX(0.9192);">Gibbs Farms</span>
<span class="t" style="left:449.50px;top:255px;font-size:6.0px;color:#777;transform:translateX(-50%);">7.20 mi.</span>
<span class="t" style="left:510.00px;top:255px;font-size:6.0px;color:#777;transform:translateX(-50%);">71.6 ac.</span>
<span class="t" style="left:576.80px;top:255px;font-size:6.0px;color:#777;transform:translateX(-50%);">17k bu.</span>
<span class="t" style="left:644.30px;top:254px;font-size:6.2px;color:#fff;-webkit-text-stroke:.16px currentColor;transform:translateX(-50%);">96.4%</span>
<span class="t" style="left:342.70px;top:273px;font-size:6.1px;color:#196b3b;font-weight:bold;transform-origin:0 0;transform:scaleX(0.9513);">McNally Farms</span>
<span class="t" style="left:449.50px;top:273px;font-size:6.0px;color:#777;transform:translateX(-50%);">10.10 mi.</span>
<span class="t" style="left:510.00px;top:273px;font-size:6.0px;color:#777;transform:translateX(-50%);">145.6 ac.</span>
<span class="t" style="left:576.80px;top:273px;font-size:6.0px;color:#777;transform:translateX(-50%);">17k bu.</span>
<span class="t" style="left:644.30px;top:273px;font-size:6.2px;color:#fff;-webkit-text-stroke:.16px currentColor;transform:translateX(-50%);">89.3%</span>
<span class="t" style="left:342.70px;top:291px;font-size:6.1px;color:#196b3b;font-weight:bold;transform-origin:0 0;transform:scaleX(0.9316);">Kinsey Farms</span>
<span class="t" style="left:449.50px;top:291px;font-size:6.0px;color:#777;transform:translateX(-50%);">10.09 mi.</span>
<span class="t" style="left:510.00px;top:291px;font-size:6.0px;color:#777;transform:translateX(-50%);">71.6 ac.</span>
<span class="t" style="left:576.80px;top:291px;font-size:6.0px;color:#777;transform:translateX(-50%);">21.4k bu.</span>
<span class="t" style="left:644.30px;top:291px;font-size:6.2px;color:#fff;-webkit-text-stroke:.16px currentColor;transform:translateX(-50%);">75.4%</span>
<span class="t" style="left:342.70px;top:310px;font-size:6.1px;color:#196b3b;font-weight:bold;transform-origin:0 0;transform:scaleX(0.9353);">Danielson Farms</span>
<span class="t" style="left:449.50px;top:310px;font-size:6.0px;color:#777;transform:translateX(-50%);">7.99 mi.</span>
<span class="t" style="left:510.00px;top:310px;font-size:6.0px;color:#777;transform:translateX(-50%);">97.9 ac.</span>
<span class="t" style="left:576.80px;top:310px;font-size:6.0px;color:#777;transform:translateX(-50%);">46.3k bu.</span>
<span class="t" style="left:644.30px;top:310px;font-size:6.2px;color:#fff;-webkit-text-stroke:.16px currentColor;transform:translateX(-50%);">73.8%</span>
<span class="t" style="left:342.70px;top:328px;font-size:6.1px;color:#196b3b;font-weight:bold;transform-origin:0 0;transform:scaleX(0.9289);">Rodriguez Farms</span>
<span class="t" style="left:449.50px;top:328px;font-size:6.0px;color:#777;transform:translateX(-50%);">3.46 mi.</span>
<span class="t" style="left:510.00px;top:328px;font-size:6.0px;color:#777;transform:translateX(-50%);">113 ac.</span>
<span class="t" style="left:576.80px;top:328px;font-size:6.0px;color:#777;transform:translateX(-50%);">29.1k bu.</span>
<span class="t" style="left:644.30px;top:328px;font-size:6.2px;color:#fff;-webkit-text-stroke:.16px currentColor;transform:translateX(-50%);">71.4%</span>
<span class="t" style="left:342.70px;top:347px;font-size:6.1px;color:#196b3b;font-weight:bold;transform-origin:0 0;transform:scaleX(0.9182);">Wilson Farms</span>
<span class="t" style="left:449.50px;top:347px;font-size:6.0px;color:#777;transform:translateX(-50%);">13.27 mi.</span>
<span class="t" style="left:510.00px;top:347px;font-size:6.0px;color:#777;transform:translateX(-50%);">41.5 ac.</span>
<span class="t" style="left:576.80px;top:347px;font-size:6.0px;color:#777;transform:translateX(-50%);">9.7k bu.</span>
<span class="t" style="left:644.30px;top:347px;font-size:6.2px;color:#fff;-webkit-text-stroke:.16px currentColor;transform:translateX(-50%);">71.4%</span>
<span class="t" style="left:342.70px;top:365px;font-size:6.1px;color:#196b3b;font-weight:bold;transform-origin:0 0;transform:scaleX(0.9268);">Grissom Farms</span>
<span class="t" style="left:449.50px;top:365px;font-size:6.0px;color:#777;transform:translateX(-50%);">11.05 mi.</span>
<span class="t" style="left:510.00px;top:365px;font-size:6.0px;color:#777;transform:translateX(-50%);">53.9 ac.</span>
<span class="t" style="left:576.80px;top:365px;font-size:6.0px;color:#777;transform:translateX(-50%);">34.1k bu.</span>
<span class="t" style="left:644.30px;top:365px;font-size:6.2px;color:#fff0c8;-webkit-text-stroke:.16px currentColor;transform:translateX(-50%);">64.3%</span>
<span class="t" style="left:342.70px;top:384px;font-size:6.1px;color:#196b3b;font-weight:bold;transform-origin:0 0;transform:scaleX(0.9265);">Trull Farms</span>
<span class="t" style="left:449.50px;top:384px;font-size:6.0px;color:#777;transform:translateX(-50%);">10.60 mi.</span>
<span class="t" style="left:510.00px;top:384px;font-size:6.0px;color:#777;transform:translateX(-50%);">139 ac.</span>
<span class="t" style="left:576.80px;top:384px;font-size:6.0px;color:#777;transform:translateX(-50%);">34.1k bu.</span>
<span class="t" style="left:644.30px;top:384px;font-size:6.2px;color:#fff0c8;-webkit-text-stroke:.16px currentColor;transform:translateX(-50%);">61.9%</span>
<span class="t" style="left:342.70px;top:402px;font-size:6.1px;color:#196b3b;font-weight:bold;transform-origin:0 0;transform:scaleX(0.9336);">Gonzalez Farms</span>
<span class="t" style="left:449.50px;top:402px;font-size:6.0px;color:#777;transform:translateX(-50%);">9.82 mi.</span>
<span class="t" style="left:510.00px;top:402px;font-size:6.0px;color:#777;transform:translateX(-50%);">43 ac.</span>
<span class="t" style="left:576.80px;top:402px;font-size:6.0px;color:#777;transform:translateX(-50%);">51.3k bu.</span>
<span class="t" style="left:644.30px;top:402px;font-size:6.2px;color:#fff;-webkit-text-stroke:.16px currentColor;transform:translateX(-50%);">48.2%</span>
<span class="t" style="left:8.90px;top:54px;font-size:5.5px;color:#8f8f8f;transform-origin:0 0;transform:scaleX(0.9139);">My Accounts</span>
<span class="t" style="left:8.90px;top:69px;font-size:5.5px;color:#8f8f8f;transform-origin:0 0;transform:scaleX(0.9013);">Facility Dashboard</span>
<span class="t" style="left:8.90px;top:84px;font-size:5.5px;color:#fff;font-weight:bold;transform-origin:0 0;transform:scaleX(0.8269);">Anders General Ingredients</span>
<span class="t" style="left:8.90px;top:99px;font-size:5.5px;color:#8f8f8f;transform-origin:0 0;transform:scaleX(0.8896);">FieldDataManager</span>
<span class="t" style="left:8.90px;top:114px;font-size:5.5px;color:#8f8f8f;transform-origin:0 0;transform:scaleX(0.8963);">Inventory</span>
<span class="t" style="left:8.90px;top:128px;font-size:5.5px;color:#8f8f8f;transform-origin:0 0;transform:scaleX(0.8957);">TankManager</span>
<span class="t" style="left:8.90px;top:143px;font-size:5.5px;color:#8f8f8f;transform-origin:0 0;transform:scaleX(0.8608);">Deliveries</span>
<span class="t" style="left:8.90px;top:157px;font-size:5.5px;color:#8f8f8f;transform-origin:0 0;transform:scaleX(0.8995);">Listings</span>
<span class="t" style="left:8.90px;top:172px;font-size:5.5px;color:#8f8f8f;transform-origin:0 0;transform:scaleX(0.8938);">Contract</span>
<span class="t" style="left:8.90px;top:187px;font-size:5.5px;color:#fff;font-weight:bold;transform-origin:0 0;transform:scaleX(0.8178);">Growers</span>
<span class="t" style="left:17.70px;top:202px;font-size:5.5px;color:#8f8f8f;transform-origin:0 0;transform:scaleX(0.8951);">Growers Wanted</span>
<span class="t" style="left:17.70px;top:216px;font-size:5.5px;color:#8f8f8f;transform-origin:0 0;transform:scaleX(0.8842);">Add Growers</span>
<span class="t" style="left:8.90px;top:231px;font-size:5.5px;color:#8f8f8f;transform-origin:0 0;transform:scaleX(0.8866);">Edit Settings</span>
<span class="t" style="left:28.80px;top:400px;font-size:5.2px;color:#8a8a8a;transform-origin:0 0;transform:scaleX(0.8176);">© 2019 AGI SURETRACK</span>
<span class="t" style="left:28.80px;top:406px;font-size:5.2px;color:#8a8a8a;transform-origin:0 0;transform:scaleX(0.9128);">All rights reserved</span>
<span class="t" style="left:23.30px;top:24px;font-size:8.9px;color:#6f6f6f;font-family:'Liberation Serif',serif;transform-origin:0 0;transform:scaleX(1.0041);">Anders General</span>
<span class="t" style="left:23.60px;top:34px;font-size:3.2px;color:#8a8a8a;letter-spacing:3.474px;transform-origin:0 0;transform:scaleX(1.001);">INGREDIENTS</span>
<span class="t" style="left:9.14px;top:-8px;font-size:10.5px;color:#fff;font-weight:bold;font-style:italic;transform-origin:0 0;transform:scaleX(0.8434);">AGI</span>
<span class="t" style="left:29.50px;top:-8px;font-size:10.5px;color:#fff;font-weight:bold;font-style:italic;transform-origin:0 0;transform:scaleX(0.7277);">SURETRACK</span>
</div>
</body>
</html>
